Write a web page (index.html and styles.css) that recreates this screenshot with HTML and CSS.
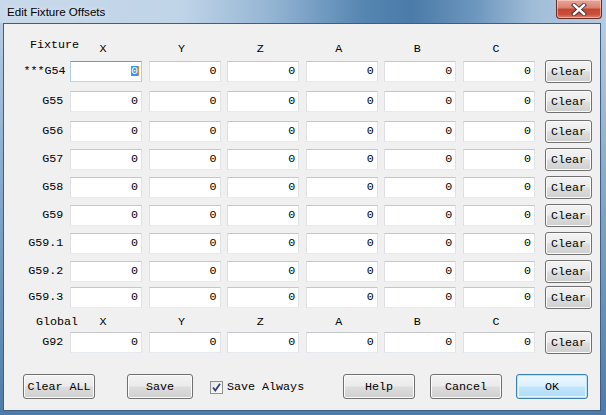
FILE: index.html
```html
<!DOCTYPE html>
<html>
<head>
<meta charset="utf-8">
<title>Edit Fixture Offsets</title>
<link rel="stylesheet" href="styles.css">
</head>
<body>
<div class="window">
  <div class="titlebar">
    <span class="title">Edit Fixture Offsets</span>
    <div class="close">
      <svg width="16" height="13" viewBox="0 0 16 13">
        <path d="M3 2 L13 11 M13 2 L3 11" stroke="#3a3030" stroke-width="4.2" stroke-linecap="square" fill="none"/>
        <path d="M3 2 L13 11 M13 2 L3 11" stroke="#ffffff" stroke-width="2.4" stroke-linecap="square" fill="none"/>
      </svg>
    </div>
  </div>
  <div class="client">
    <div class="row head head-top">
      <span class="group group-fixture">Fixture</span>
      <span class="col">X</span><span class="col">Y</span><span class="col">Z</span>
      <span class="col">A</span><span class="col">B</span><span class="col">C</span>
    </div>
    <div class="row first">
      <span class="lbl">***G54</span>
      <div class="field focus"><span class="sel">0</span></div>
      <div class="field">0</div><div class="field">0</div><div class="field">0</div><div class="field">0</div><div class="field">0</div>
      <div class="btn clear">Clear</div>
    </div>
    <div class="row wide">
      <span class="lbl">G55</span>
      <div class="field">0</div><div class="field">0</div><div class="field">0</div><div class="field">0</div><div class="field">0</div><div class="field">0</div>
      <div class="btn clear">Clear</div>
    </div>
    <div class="row wide">
      <span class="lbl">G56</span>
      <div class="field">0</div><div class="field">0</div><div class="field">0</div><div class="field">0</div><div class="field">0</div><div class="field">0</div>
      <div class="btn clear">Clear</div>
    </div>
    <div class="row">
      <span class="lbl">G57</span>
      <div class="field">0</div><div class="field">0</div><div class="field">0</div><div class="field">0</div><div class="field">0</div><div class="field">0</div>
      <div class="btn clear">Clear</div>
    </div>
    <div class="row">
      <span class="lbl">G58</span>
      <div class="field">0</div><div class="field">0</div><div class="field">0</div><div class="field">0</div><div class="field">0</div><div class="field">0</div>
      <div class="btn clear">Clear</div>
    </div>
    <div class="row">
      <span class="lbl">G59</span>
      <div class="field">0</div><div class="field">0</div><div class="field">0</div><div class="field">0</div><div class="field">0</div><div class="field">0</div>
      <div class="btn clear">Clear</div>
    </div>
    <div class="row">
      <span class="lbl">G59.1</span>
      <div class="field">0</div><div class="field">0</div><div class="field">0</div><div class="field">0</div><div class="field">0</div><div class="field">0</div>
      <div class="btn clear">Clear</div>
    </div>
    <div class="row">
      <span class="lbl">G59.2</span>
      <div class="field">0</div><div class="field">0</div><div class="field">0</div><div class="field">0</div><div class="field">0</div><div class="field">0</div>
      <div class="btn clear">Clear</div>
    </div>
    <div class="row tight">
      <span class="lbl">G59.3</span>
      <div class="field">0</div><div class="field">0</div><div class="field">0</div><div class="field">0</div><div class="field">0</div><div class="field">0</div>
      <div class="btn clear">Clear</div>
    </div>
    <div class="row head head-global">
      <span class="group group-global">Global</span>
      <span class="col">X</span><span class="col">Y</span><span class="col">Z</span>
      <span class="col">A</span><span class="col">B</span><span class="col">C</span>
    </div>
    <div class="row first">
      <span class="lbl">G92</span>
      <div class="field">0</div><div class="field">0</div><div class="field">0</div><div class="field">0</div><div class="field">0</div><div class="field">0</div>
      <div class="btn clear">Clear</div>
    </div>
    <div class="footer">
      <div class="btn btn-clearall">Clear ALL</div>
      <div class="btn btn-save">Save</div>
      <div class="check">
        <span class="box">
          <svg width="11" height="11" viewBox="0 0 11 11"><path d="M2 5.5 L4.3 8.5 L9 1.8" stroke="#2a3f86" stroke-width="1.8" fill="none"/></svg>
        </span>
        <span class="check-text">Save Always</span>
      </div>
      <div class="btn btn-help">Help</div>
      <div class="btn btn-cancel">Cancel</div>
      <div class="btn btn-ok">OK</div>
    </div>
  </div>
</div>
</body>
</html>
```

FILE: styles.css
```css
* { box-sizing: border-box; }
html, body { margin: 0; padding: 0; }
body {
  width: 606px;
  height: 415px;
  overflow: hidden;
  background: #ffffff;
}
.window {
  width: 606px;
  height: 415px;
  display: flex;
  flex-direction: column;
  background: linear-gradient(180deg, #bcd0e5 0%, #86a8ca 45%, #4c7caa 100%);
}
.titlebar {
  height: 23px;
  flex: none;
  display: flex;
  align-items: flex-start;
  background: linear-gradient(90deg, #c8d9ea 0%, #c0d4e8 30%, #93b4d3 45%, #5585b1 60%, #4b7ba8 68%, #6b95bd 78%, #a0bdd8 88%, #b5cbe1 100%);
}
.title {
  font-family: "Liberation Sans", Arial, sans-serif;
  font-size: 11.6px;
  color: #000;
  margin-left: 7px;
  margin-top: 5px;
  line-height: 13px;
  text-shadow: 0 0 6px rgba(255,255,255,0.8);
}
.close {
  margin-left: auto;
  margin-right: 4px;
  width: 46px;
  height: 19px;
  border: 1px solid #6b2a24;
  border-top: none;
  border-radius: 0 0 4px 4px;
  background: linear-gradient(180deg, #e8a69a 0%, #d9806f 45%, #c4452f 50%, #c9503b 80%, #dc8573 100%);
  box-shadow: inset 0 0 0 1px rgba(255,220,210,0.55);
  display: flex;
  align-items: center;
  justify-content: center;
}
.client {
  flex: 1;
  margin: 0 5px 4px 3px;
  border: 1px solid #3f5f82;
  background: #f0f0f0;
  font-family: "Liberation Mono", "Courier New", monospace;
  font-size: 11.7px;
  color: #000;
  display: flex;
  flex-direction: column;
}
.row {
  display: grid;
  grid-template-columns: 40px repeat(6, 72px) 47px;
  column-gap: 6.6px;
  padding-left: 19.4px;
  height: 21px;
  align-items: center;
  margin-top: 7px;
  flex: none;
}
.row.first { margin-top: 0; }
.row.wide { margin-top: 9px; }
.row.tight { margin-top: 5px; }
.row.head {
  margin-top: 0;
  align-items: end;
}
.head-top { height: 36px; }
.head-global { height: 24px; }
.lbl {
  text-align: right;
  white-space: nowrap;
  line-height: 13px;
}
.group {
  white-space: nowrap;
  line-height: 13px;
  justify-self: start;
}
.group-fixture { margin-left: 6.6px; padding-bottom: 8px; }
.group-global { margin-left: 12.6px; padding-bottom: 2px; }
.col {
  text-align: center;
  padding-right: 6px;
  line-height: 13px;
}
.head-top .col { padding-bottom: 4px; }
.head-global .col { padding-bottom: 2px; }
.field {
  height: 21px;
  background: #fff;
  border: 1px solid;
  border-color: #c4c6cc #dfe3e8 #e6e9ed #dcdfe4;
  text-align: right;
  padding-right: 3px;
  line-height: 19px;
  white-space: nowrap;
}
.field.focus {
  border-color: #5c9fd9 #a9cdea #b9d7ef #a9cdea;
}
.sel {
  display: inline-block;
  background: #3399ff;
  color: #fff;
  line-height: 10px;
  height: 10px;
  border-right: 1px solid #e0852f;
  vertical-align: middle;
  margin-right: -1px;
}
.btn {
  height: 25px;
  border: 1px solid #707070;
  border-radius: 3px;
  background: linear-gradient(180deg, #f3f3f3 0%, #ebebeb 48%, #dddddd 52%, #cfcfcf 100%);
  box-shadow: inset 0 0 0 1px #fbfbfb;
  display: flex;
  align-items: center;
  justify-content: center;
  white-space: nowrap;
  line-height: 13px;
  padding-top: 1px;
}
.btn.clear {
  height: 23px;
  margin-left: 3.4px;
  width: 47px;
}
.footer {
  display: flex;
  align-items: center;
  margin-top: 22px;
  padding-left: 19px;
  padding-right: 12px;
  height: 25px;
  flex: none;
}
.btn-clearall { width: 72px; }
.btn-save { width: 66px; margin-left: 32px; }
.check {
  display: flex;
  align-items: center;
  margin-left: 17px;
  padding-top: 1px;
}
.box {
  width: 13px;
  height: 13px;
  border: 1px solid #8e8f8f;
  background: linear-gradient(135deg, #e6e6e6 0%, #ffffff 100%);
  display: flex;
  align-items: center;
  justify-content: center;
}
.check-text {
  margin-left: 4px;
  line-height: 13px;
}
.btn-help { width: 72px; margin-left: auto; }
.btn-cancel { width: 72px; margin-left: 15px; }
.btn-ok {
  width: 72px;
  margin-left: 14px;
  border-color: #3c7fb1;
  background: linear-gradient(180deg, #ebf7fe 0%, #dcf1fd 48%, #c2e6fb 52%, #addcf5 100%);
  box-shadow: inset 0 0 0 1px #b9e2f9, inset 0 0 0 2px #e5f5fd;
}
```
